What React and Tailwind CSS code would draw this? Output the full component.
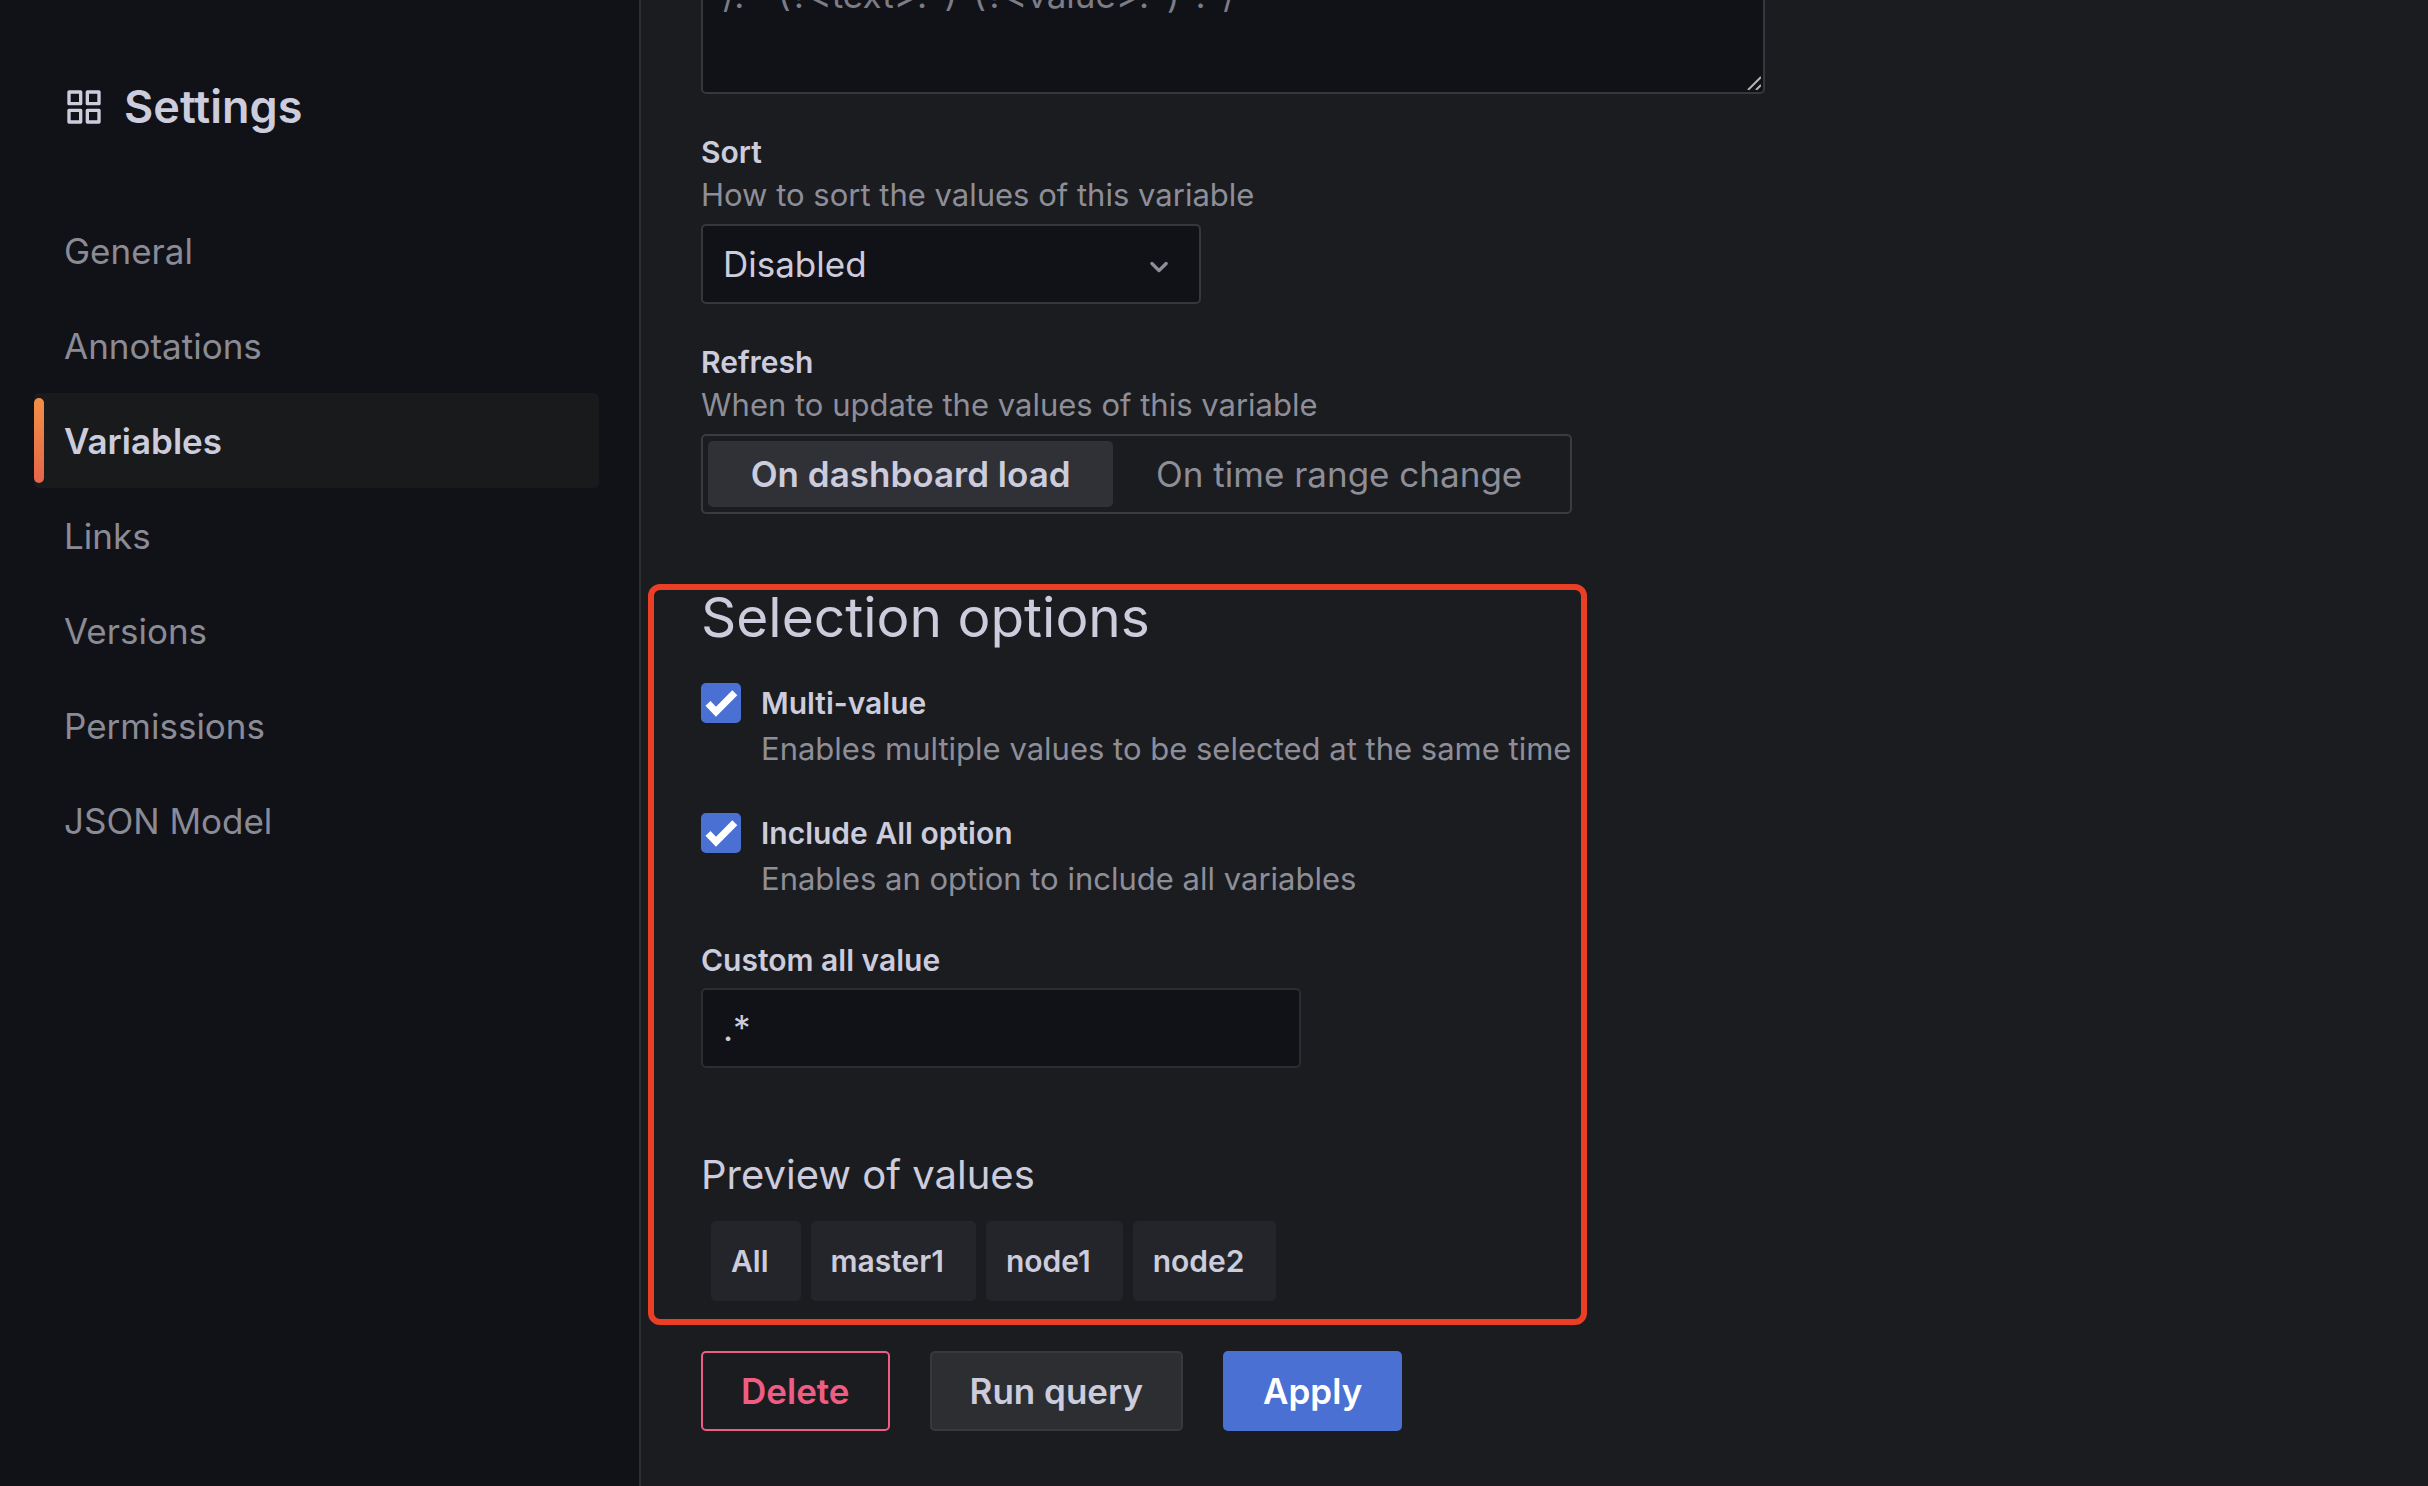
import { useState } from "react";

const navItems = ["General", "Annotations", "Variables", "Links", "Versions", "Permissions", "JSON Model"];
const previewValues = ["All", "master1", "node1", "node2"];
const refreshModes = ["On dashboard load", "On time range change"];

function AppsIcon() {
  return (
    <svg viewBox="0 0 24 24" className="size-10 shrink-0" fill="currentColor" aria-hidden="true">
      <path d="M10,13H3a1,1,0,0,0-1,1v7a1,1,0,0,0,1,1h7a1,1,0,0,0,1-1V14A1,1,0,0,0,10,13ZM9,20H4V15H9ZM21,2H14a1,1,0,0,0-1,1v7a1,1,0,0,0,1,1h7a1,1,0,0,0,1-1V3A1,1,0,0,0,21,2ZM20,9H15V4h5Zm1,4H14a1,1,0,0,0-1,1v7a1,1,0,0,0,1,1h7a1,1,0,0,0,1-1V14A1,1,0,0,0,21,13Zm-1,7H15V15h5ZM10,2H3A1,1,0,0,0,2,3v7a1,1,0,0,0,1,1h7a1,1,0,0,0,1-1V3A1,1,0,0,0,10,2ZM9,9H4V4H9Z" />
    </svg>
  );
}

function AngleDownIcon({ className }) {
  return (
    <svg viewBox="0 0 24 24" className={className} fill="currentColor" aria-hidden="true">
      <path d="M17,9.17a1,1,0,0,0-1.41,0L12,12.71,8.46,9.17a1,1,0,0,0-1.41,0,1,1,0,0,0,0,1.42l4.24,4.24a1,1,0,0,0,1.42,0L17,10.59A1,1,0,0,0,17,9.17Z" />
    </svg>
  );
}

function Sidebar() {
  return (
    <aside className="w-[641px] shrink-0 border-r-2 border-[#2c2d31] bg-[#111217] pr-10 pl-[34px]">
      <h1 className="flex items-center gap-5 pt-20 pl-[30px] text-[45px] leading-[54px] font-semibold text-[#ccccdc]">
        <AppsIcon />
        Settings
      </h1>
      <nav className="mt-[69px] flex flex-col">
        {navItems.map((item) => {
          const active = item === "Variables";
          return (
            <a
              key={item}
              href="#"
              aria-current={active ? "page" : undefined}
              className={
                active
                  ? "relative flex h-[95px] items-center rounded-[5px] bg-[#181a1c] pl-[30px] font-semibold text-[#ccccdc]"
                  : "relative flex h-[95px] items-center rounded-[5px] pl-[30px] text-[#8b8b96]"
              }
            >
              {active && (
                <span className="absolute inset-y-[5px] left-0 w-[10px] rounded-[5px] bg-linear-to-b from-[#f28f45] to-[#e5654a]" />
              )}
              {item}
            </a>
          );
        })}
      </nav>
    </aside>
  );
}

function FieldLabel({ htmlFor, title, description }) {
  return (
    <div className="mb-[10px] leading-9">
      <label htmlFor={htmlFor} className="block text-[30px] font-semibold text-[#ccccdc]">
        {title}
      </label>
      {description && <p className="mt-[7px] pb-px text-[31px] text-[#8e8e99]">{description}</p>}
    </div>
  );
}

function CheckField({ id, title, description }) {
  const [checked, setChecked] = useState(true);
  return (
    <div className="grid grid-cols-[40px_1fr] gap-x-5 gap-y-2">
      <span className="relative size-10">
        <input
          id={id}
          type="checkbox"
          checked={checked}
          onChange={(e) => setChecked(e.target.checked)}
          className="block size-10 appearance-none rounded-[5px] border-2 border-[#38393d] bg-[#111217] checked:border-[#4a70d3] checked:bg-[#4a70d3]"
        />
        {checked && (
          <svg viewBox="0 0 40 40" className="pointer-events-none absolute inset-0 size-10" fill="none" stroke="#fff" strokeWidth="7" aria-hidden="true">
            <path d="M7 20.3 L15 28.8 L33.8 9.7" />
          </svg>
        )}
      </span>
      <label htmlFor={id} className="text-[30px] leading-10 font-semibold text-[#ccccdc]">
        {title}
      </label>
      <p className="col-start-2 text-[31px] leading-9 whitespace-nowrap text-[#8e8e99]">{description}</p>
    </div>
  );
}

export default function App() {
  const [mode, setMode] = useState(refreshModes[0]);
  return (
    <div className="flex min-h-screen overflow-hidden bg-[#1b1c20] font-['Inter',sans-serif] text-[35px] leading-[54px]">
      <Sidebar />
      <main className="min-w-0 flex-1 pl-[60px]">
        <div className="relative -mt-[46px] w-[1064px]">
          <textarea
            aria-label="Regex"
            placeholder="/.*-(?<text>.*)-(?<value>.*)-.*/"
            className="block h-[140px] w-full resize-none rounded-[5px] border-2 border-[#36373b] bg-[#111217] px-5 py-3 text-[#ccccdc] placeholder:text-[#7d7d88]"
          />
          <svg viewBox="0 0 14 14" className="pointer-events-none absolute right-1 bottom-1 size-[14px]" fill="none" stroke="#b4b4b4" strokeWidth="2" aria-hidden="true">
            <path d="M1 14 L14 1 M9 14 L14 9" />
          </svg>
        </div>

        <div className="mt-10">
          <FieldLabel htmlFor="sort" title="Sort" description="How to sort the values of this variable" />
          <div className="relative w-[500px]">
            <select
              id="sort"
              className="block h-20 w-full appearance-none rounded-[5px] border-2 border-[#36373b] bg-[#111217] px-5 text-[#ccccdc]"
            >
              <option>Disabled</option>
            </select>
            <AngleDownIcon className="pointer-events-none absolute top-[23px] right-[22px] size-10 text-[#8e8e99]" />
          </div>
        </div>

        <div className="mt-10">
          <FieldLabel title="Refresh" description="When to update the values of this variable" />
          <div className="flex h-20 w-[871px] rounded-[5px] border-2 border-[#3a3b40] p-[5px]">
            {refreshModes.map((m) => (
              <label
                key={m}
                className="flex flex-auto items-center justify-center rounded-[5px] px-9 whitespace-nowrap text-[#8e8e99] has-checked:bg-[#303136] has-checked:font-semibold has-checked:text-[#ccccdc]"
              >
                <input type="radio" name="refresh" className="sr-only" checked={mode === m} onChange={() => setMode(m)} />
                {m}
              </label>
            ))}
          </div>
        </div>

        <section className="mt-[70px] -ml-[53px] w-[939px] rounded-xl border-6 border-[#eb3f25] pb-[18px] pl-[47px]">
          <h2 className="text-[55px] leading-[54px] text-[#ccccdc]">Selection options</h2>
          <div className="mt-[39px] flex flex-col gap-[46px]">
            <CheckField id="multi" title="Multi-value" description="Enables multiple values to be selected at the same time" />
            <CheckField id="include-all" title="Include All option" description="Enables an option to include all variables" />
          </div>
          <div className="mt-[45px]">
            <FieldLabel htmlFor="custom-all" title="Custom all value" />
            <input
              id="custom-all"
              type="text"
              defaultValue=".*"
              className="block h-20 w-[600px] rounded-[5px] border-2 border-[#2c2d31] bg-[#111217] px-5 text-[#ccccdc]"
            />
          </div>
          <h3 className="mt-20 text-[40px] text-[#ccccdc]">Preview of values</h3>
          <div className="mt-[19px] ml-[10px] flex gap-[10px]">
            {previewValues.map((v) => (
              <span key={v} className="flex h-20 items-center rounded-[5px] bg-[#24252a] pr-8 pl-5 text-[30px] font-semibold text-[#ccccdc]">
                {v}
              </span>
            ))}
          </div>
        </section>

        <div className="mt-[26px] flex gap-10 font-semibold">
          <button type="button" className="h-20 rounded-[5px] border-2 border-[#ee5d84] px-[38px] text-[#ee5d84]">
            Delete
          </button>
          <button type="button" className="h-20 rounded-[5px] border-2 border-[#38393d] bg-[#2d2e32] px-[38px] text-[#ccccdc]">
            Run query
          </button>
          <button type="button" className="h-20 rounded-[5px] bg-[#4a70d3] px-10 text-white">
            Apply
          </button>
        </div>
      </main>
    </div>
  );
}
